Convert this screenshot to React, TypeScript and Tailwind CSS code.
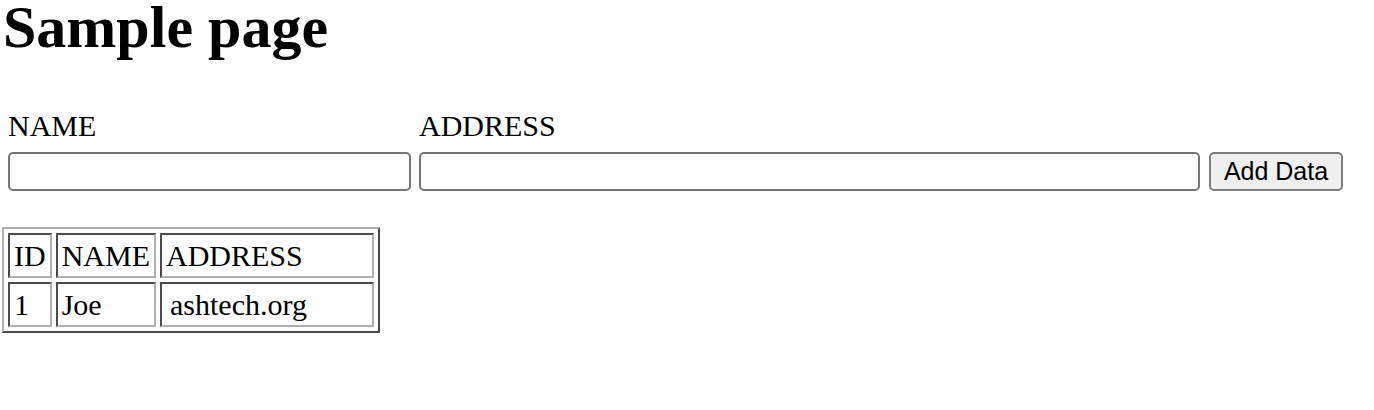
import React from 'react';

const rows = [
  { id: 'ID', name: 'NAME', address: 'ADDRESS' },
  { id: '1', name: 'Joe', address: 'ashtech.org' },
];

const cell =
  "h-[45px] px-[4px] py-0 align-middle whitespace-nowrap border-2 border-t-[#4a4a4a] border-l-[#4a4a4a] border-r-[#b0b0b0] border-b-[#b0b0b0]";

export default function App() {
  return (
    <div className="min-h-[410px] bg-white text-black font-['Liberation_Serif','Times_New_Roman',serif]">
      {/* Heading */}
      <h1 className="m-0 pl-[3px] text-[60px] font-bold leading-[54px]">Sample page</h1>

      {/* Labels */}
      <div className="mt-[57px] flex pl-2 text-[30px] leading-[30px]">
        <div className="w-[403px]">NAME</div>
        <div className="ml-2">ADDRESS</div>
      </div>

      {/* Form row */}
      <div className="mt-[11px] flex items-center pl-2">
        <input
          type="text"
          className="h-[39px] w-[403px] rounded-[5px] border-2 border-[#767676] bg-white"
        />
        <input
          type="text"
          className="ml-2 h-[39px] w-[781px] rounded-[5px] border-2 border-[#767676] bg-white"
        />
        <button className="ml-[9px] h-[39px] w-[134px] rounded-[5px] border-2 border-[#7d7d7d] bg-[#efefef] font-['Liberation_Sans',Arial,sans-serif] text-[25px] leading-none text-black">
          Add Data
        </button>
      </div>

      {/* Data table */}
      <table className="ml-[2px] mt-[36px] border-separate border-spacing-[4px] border-2 border-t-[#b0b0b0] border-l-[#b0b0b0] border-r-[#4a4a4a] border-b-[#4a4a4a] text-[30px] leading-[34px]">
        <tbody>
          {rows.map((row, i) => (
            <tr key={i}>
              <td className={`${cell} w-[42px]`}>{row.id}</td>
              <td className={`${cell} w-[100px]`}>{row.name}</td>
              <td className={`${cell} w-[214px]`}>
                {i === 1 ? <span className="pl-[4px]">{row.address}</span> : row.address}
              </td>
            </tr>
          ))}
        </tbody>
      </table>
    </div>
  );
}
